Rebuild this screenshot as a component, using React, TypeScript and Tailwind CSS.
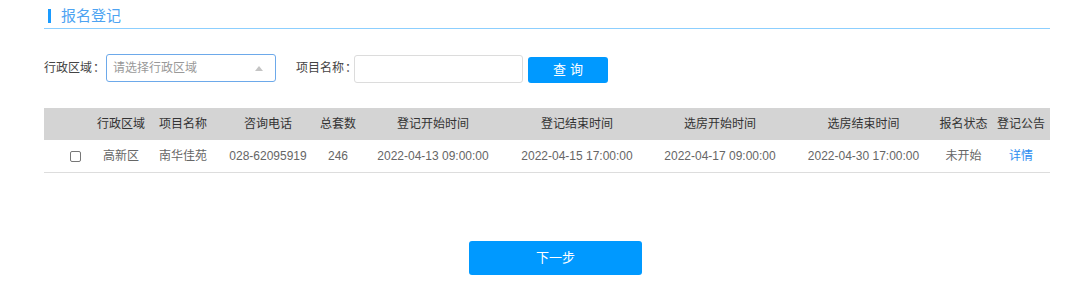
import React from 'react';

const font = { fontFamily: '"Liberation Sans", "Noto Sans CJK SC", sans-serif' };

const cols = 'grid grid-cols-[52px_50px_74px_96px_44px_146px_142px_144px_143px_57px_58px]';

const headers = ['', '行政区域', '项目名称', '咨询电话', '总套数', '登记开始时间', '登记结束时间', '选房开始时间', '选房结束时间', '报名状态', '登记公告'];

const rows = [
  {
    area: '高新区',
    name: '南华佳苑',
    phone: '028-62095919',
    total: '246',
    regStart: '2022-04-13 09:00:00',
    regEnd: '2022-04-15 17:00:00',
    pickStart: '2022-04-17 09:00:00',
    pickEnd: '2022-04-30 17:00:00',
    status: '未开始',
  },
];

export default function App() {
  return (
    <div className="w-[1080px] h-[297px] bg-white text-[12px]" style={font}>
      {/* title */}
      <div className="ml-[44px] w-[1006px] pt-[7px] h-[29px] border-b border-[#8ccfff]">
        <div className="flex items-center h-[17px] pl-[4px]">
          <span className="w-[3px] h-[14px] bg-[#1a9bff]" />
          <span className="ml-[10px] text-[15px] leading-[17px] text-[#4da3f2]">报名登记</span>
        </div>
      </div>

      {/* filters */}
      <div className="flex items-center ml-[44px] mt-[25px] h-[28px]">
        <span className="text-[#444] whitespace-nowrap w-[62px] pr-[2px]">行政区域<span className="pl-[1px]">：</span></span>
        <div className="w-[170px] h-[28px] border border-[#6da9ea] rounded-[3px] flex items-center justify-between pl-[6px] pr-[12px]">
          <span className="text-[#999]">请选择行政区域</span>
          <span className="w-0 h-0 border-l-[4px] border-r-[4px] border-b-[5px] border-l-transparent border-r-transparent border-b-[#c4c4c4]" />
        </div>
        <span className="ml-[20px] text-[#444] whitespace-nowrap w-[58px]">项目名称<span className="pl-[1px]">：</span></span>
        <div className="w-[169px] h-[28px] mt-[1px] border border-[#dcdcdc] rounded-[3px] bg-white" />
        <button className="ml-[5px] mt-[3px] w-[80px] h-[26px] rounded-[3px] bg-[#0099ff] text-white text-[13px] tracking-[4px] pl-[4px]">
          查询
        </button>
      </div>

      {/* table */}
      <div className="ml-[44px] mt-[26px] w-[1006px]">
        <div className={`${cols} h-[32px] bg-[#d4d4d4] text-[#333]`}>
          {headers.map((h, i) => (
            <div key={i} className="flex items-center justify-center whitespace-nowrap">
              {h}
            </div>
          ))}
        </div>
        {rows.map((r, i) => (
          <div key={i} className={`${cols} h-[33px] border-b border-[#dddddd] text-[#666]`}>
            <div className="flex items-center justify-center pl-[10px]">
              <span className="w-[11px] h-[11px] border border-[#777] rounded-[2px] bg-white" />
            </div>
            <div className="flex items-center justify-center whitespace-nowrap">{r.area}</div>
            <div className="flex items-center justify-center whitespace-nowrap">{r.name}</div>
            <div className="flex items-center justify-center whitespace-nowrap">{r.phone}</div>
            <div className="flex items-center justify-center whitespace-nowrap">{r.total}</div>
            <div className="flex items-center justify-center whitespace-nowrap">{r.regStart}</div>
            <div className="flex items-center justify-center whitespace-nowrap">{r.regEnd}</div>
            <div className="flex items-center justify-center whitespace-nowrap">{r.pickStart}</div>
            <div className="flex items-center justify-center whitespace-nowrap">{r.pickEnd}</div>
            <div className="flex items-center justify-center whitespace-nowrap">{r.status}</div>
            <div className="flex items-center justify-center whitespace-nowrap text-[#2d8cf0]">详情</div>
          </div>
        ))}
      </div>

      {/* next */}
      <div className="ml-[469px] mt-[68px]">
        <button className="w-[173px] h-[34px] rounded-[3px] bg-[#0099ff] text-white text-[13px]">
          下一步
        </button>
      </div>
    </div>
  );
}
